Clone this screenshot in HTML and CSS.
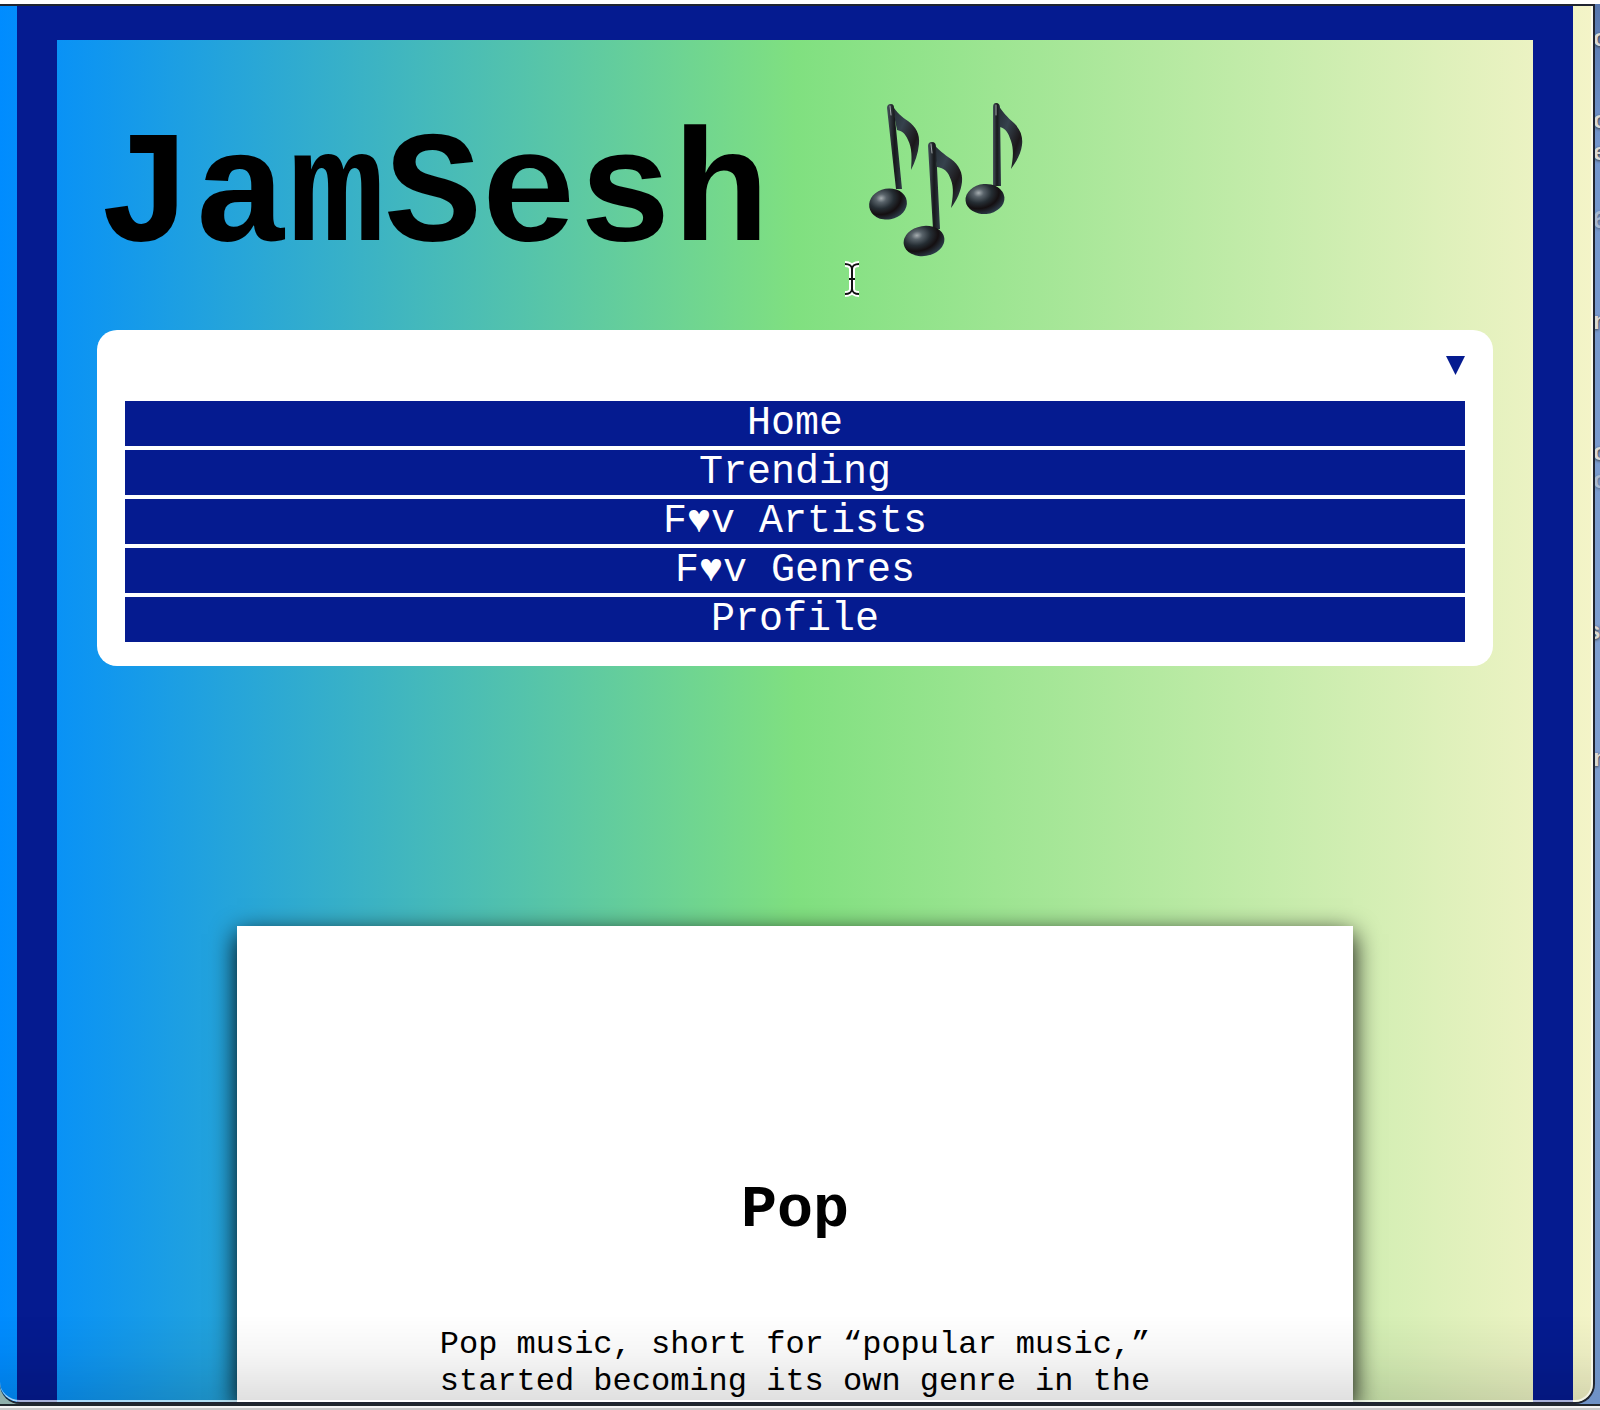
FILE: index.html
```html
<!DOCTYPE html>
<html lang="en">
<head>
<meta charset="utf-8">
<title>JamSesh</title>
<link rel="stylesheet" href="styles.css">
</head>
<body>
<div class="desktop">
  <div class="stage">
    <div class="window">
      <div class="page">
        <header class="masthead">
          <h1>JamSesh</h1>
          <svg class="notes" viewBox="0 0 160 160" aria-hidden="true">
            <defs>
              <linearGradient id="flag" x1="0" y1="0" x2="1" y2="1">
                <stop offset="0" stop-color="#222a31"/><stop offset=".35" stop-color="#36424d"/><stop offset=".7" stop-color="#1b1719"/><stop offset="1" stop-color="#3a4c5c"/>
              </linearGradient>
              <radialGradient id="head" cx=".35" cy=".28" r=".75">
                <stop offset="0" stop-color="#a6adb0"/><stop offset=".18" stop-color="#59636a"/><stop offset=".45" stop-color="#252d33"/><stop offset=".7" stop-color="#140f11"/><stop offset="1" stop-color="#2c3b48"/>
              </radialGradient>
              <linearGradient id="stem">
                <stop offset="0" stop-color="#46525c"/><stop offset=".5" stop-color="#17181b"/><stop offset="1" stop-color="#303b46"/>
              </linearGradient>
            </defs>
            <path fill="url(#flag)" d="M27 2C32 10 37 14 43 18C51 24 55 31 54 41C53 51 50 59 46 67C47 54 47 45 43 37C40 30 37 28 32 27Z"/>
            <path fill="url(#stem)" d="M22 5Q22 1 26 1Q29 1 29 5L37 86L31 86Z"/>
            <ellipse cx="23" cy="101" rx="19" ry="15.500" transform="rotate(-10 23 101)" fill="url(#head)"/>
            <path fill="url(#flag)" d="M68 40C73 47 79 51 86 56C94 62 98 70 97 79C96 88 92 97 86 105C88 94 89 85 86 77C83 68 79 65 72 64Z"/>
            <path fill="url(#stem)" d="M63 43Q63 39 67 39Q71 39 71 44L75 126L68 126Z"/>
            <ellipse cx="59" cy="138" rx="20.500" ry="15" transform="rotate(-9 59 138)" fill="url(#head)"/>
            <path fill="url(#flag)" d="M133 2C138 9 142 14 149 20C156 27 158 34 157 42C156 51 151 59 146 66C148 56 149 47 146 38C143 29 141 26 135 24Z"/>
            <path fill="url(#stem)" d="M128 4Q128 0 131 0Q135 0 135 5L136 83L128 83Z"/>
            <ellipse cx="120" cy="96" rx="19.500" ry="15" transform="rotate(-5 120 96)" fill="url(#head)"/>
            <g fill="none" stroke="#d4d8da" stroke-linecap="round" stroke-opacity=".7">
              <path stroke-width="1" d="M25 3L26 12M66 41L67 50M131 2L131 12"/>
            </g>
          </svg>
        </header>

        <nav class="menu" aria-label="Main">
          <button class="menu-toggle" type="button" aria-label="Toggle menu">
            <svg viewBox="0 0 19 19" aria-hidden="true"><path d="M0 0H19L9.500 19Z"/></svg>
          </button>
          <ul class="menu-list">
            <li><a href="#home">Home</a></li>
            <li><a href="#trending">Trending</a></li>
            <li><a href="#artists">F♥v Artists</a></li>
            <li><a href="#genres">F♥v Genres</a></li>
            <li><a href="#profile">Profile</a></li>
          </ul>
        </nav>

        <main class="genre">
          <h2>Pop</h2>
          <p>Pop music, short for “popular music,” started becoming its own genre in the</p>
        </main>
      </div>
    </div>
    <div class="wallpaper" aria-hidden="true">
      <span class="label l1">o</span>
      <span class="label l2">o</span>
      <span class="label l3">e</span>
      <span class="label dim l4">6</span>
      <span class="label l5">n</span>
      <span class="label l6">c</span>
      <span class="label dim l7">o</span>
      <span class="label l8">st</span>
      <span class="label l9">n</span>
    </div>
  </div>
  <div class="dock-edge"></div>
  <svg class="caret" viewBox="0 0 18 36" aria-hidden="true">
    <path d="M2 3C6 3 9 5 9 8V28C9 31 6 33 2 33M16 3C12 3 9 5 9 8M9 28C9 31 12 33 16 33M6 18H12" fill="none" stroke="#fff" stroke-width="6"/>
    <path d="M2 3C6 3 9 5 9 8V28C9 31 6 33 2 33M16 3C12 3 9 5 9 8M9 28C9 31 12 33 16 33M6 18H12" fill="none" stroke="#111" stroke-width="2"/>
  </svg>
</div>
</body>
</html>
```
FILE: styles.css
```css
:root {
  --navy: #051b90;
  --mono: "Courier New", "Liberation Mono", monospace;
}

* {
  box-sizing: border-box;
}

body {
  margin: 0;
  font-family: var(--mono);
  color: #000;
}

.desktop {
  position: relative;
  display: flex;
  flex-direction: column;
  height: 100vh;
  overflow: hidden;
  padding-top: 4px;
  background: #fff;
}

.stage {
  flex: 1;
  min-height: 0;
  display: flex;
  background: linear-gradient(90deg, #8fb0ab, #6f92c6);
}

.window {
  position: relative;
  flex: 1;
  display: flex;
  overflow: hidden;
  padding: 0 20px 0 17px;
  border: solid #1f2430;
  border-width: 2px 2px 2px 0;
  border-radius: 0 0 20px 20px;
  background: linear-gradient(90deg, #008cff, #80e080 50%, #f4f4c8);
}

/* shade and highlight along the window's lower and right edges */
.window::after {
  content: "";
  position: absolute;
  inset: 0;
  border: solid rgba(255, 255, 255, 0.65);
  border-width: 0 2px 2px 0;
  border-radius: 0 0 18px 20px;
  background: linear-gradient(0deg, rgba(0, 0, 0, 0.12), rgba(0, 0, 0, 0.04) 45px, transparent 85px);
  pointer-events: none;
}

.page {
  flex: 1;
  min-width: 0;
  display: flex;
  flex-direction: column;
  padding: 67px 40px 0;
  border: solid var(--navy);
  border-width: 34px 40px 0;
}

.masthead {
  display: flex;
  align-items: flex-start;
  gap: 96px;
  margin-bottom: 42px;
}

h1 {
  margin: 0;
  font-size: 160px;
  line-height: 181px;
}

.notes {
  width: 160px;
  height: 160px;
  margin-top: -4px;
  overflow: visible;
}

.menu {
  padding: 24px 2%;
  border-radius: 20px;
  background: #fff;
}

.menu-toggle {
  display: block;
  margin: 0 0 0 auto;
  padding: 2px 0 26px;
  border: 0;
  background: none;
}

.menu-toggle svg {
  display: block;
  width: 19px;
  height: 19px;
  fill: var(--navy);
}

.menu-list {
  display: grid;
  gap: 4px;
  margin: 0;
  padding: 0;
  list-style: none;
}

.menu-list a {
  display: block;
  background: var(--navy);
  color: #fff;
  font-size: 40px;
  line-height: 45px;
  text-align: center;
  text-decoration: none;
}

.genre {
  flex: 1 0 auto;
  margin: 260px 10% 0;
  padding: 250px 200px 0;
  background: #fff;
  box-shadow: 0 8px 24px #000;
  text-align: center;
}

h2 {
  margin: 0 0 82px;
  font-size: 60px;
  line-height: 68px;
}

p {
  margin: 0;
  font-size: 32px;
  line-height: 37px;
}

.wallpaper {
  position: relative;
  width: 5px;
  overflow: hidden;
  background: linear-gradient(#5676ad, #7396cd 10%, #7f9fd0 50%, #6f92c6);
}

.label {
  position: absolute;
  left: -2px;
  color: #dadad6;
  font: bold 24px/28px "Liberation Sans", sans-serif;
  text-shadow: 0 1px 3px #333;
}

.dim { opacity: 0.5; }

.l1 { top: 20px; }
.l2 { top: 102px; }
.l3 { top: 134px; }
.l4 { top: 202px; }
.l5 { top: 303px; }
.l6 { top: 434px; }
.l7 { top: 462px; }
.l8 { top: 613px; left: -8px; }
.l9 { top: 740px; }

.dock-edge {
  height: 6px;
  border-top: 2px solid #20262c;
  border-bottom: 2px solid #c8c8c8;
  background: #f4f4f4;
}

.caret {
  position: absolute;
  left: 843px;
  top: 261px;
  width: 18px;
  height: 36px;
}
```
